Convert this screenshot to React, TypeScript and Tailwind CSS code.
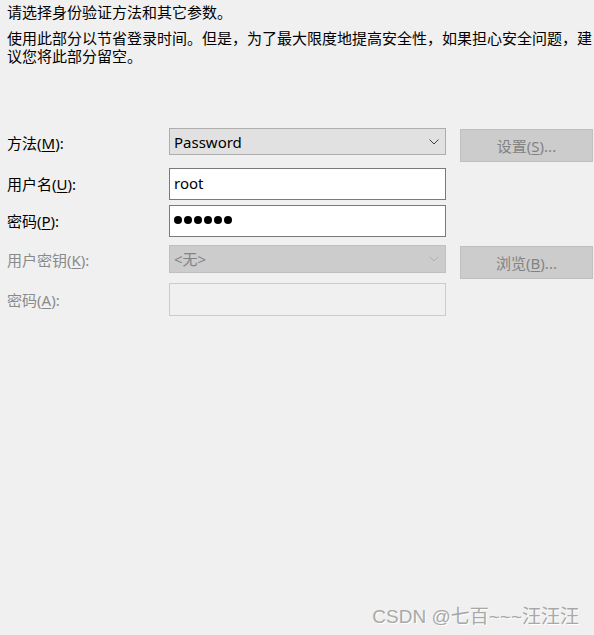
import React from "react";

const font = { fontFamily: '"Noto Sans", "Noto Sans CJK SC", sans-serif' };

function Chevron({ color }: { color: string }) {
  return (
    <svg width="10" height="6" viewBox="0 0 10 6" className="shrink-0">
      <polyline points="0.5,0.5 5,5 9.5,0.5" fill="none" stroke={color} strokeWidth="1" />
    </svg>
  );
}

function Label({ text, k, disabled }: { text: string; k: string; disabled?: boolean }) {
  return (
    <span className={disabled ? "text-[#8a8a8a]" : "text-black"}>
      {text}(<span className="underline underline-offset-2">{k}</span>):
    </span>
  );
}

export default function App() {
  return (
    <div
      className="relative w-[594px] h-[635px] bg-[#f0f0f0] text-[15px] leading-[18px] text-black overflow-hidden"
      style={font}
    >
      <div className="pl-[7px] pt-[3px]">
        <p>请选择身份验证方法和其它参数。</p>
        <p className="mt-[8px] pr-[1px]">
          使用此部分以节省登录时间。但是，为了最大限度地提高安全性，如果担心安全问题，建议您将此部分留空。
        </p>
      </div>

      <div className="mt-[63px] pl-[7px] flex flex-col">
        {/* Row 1 */}
        <div className="flex items-start">
          <div className="w-[162px] h-[27px] flex items-center pt-[3px]">
            <Label text="方法" k="M" />
          </div>
          <div className="w-[277px] h-[27px] bg-[#e1e1e1] border border-[#adadad] flex items-center justify-between pl-[4px] pr-[6px]">
            <span>Password</span>
            <Chevron color="#404040" />
          </div>
          <div className="ml-[14px] mt-[1px] w-[133px] h-[33px] bg-[#cccccc] border border-[#bfbfbf] flex items-center justify-center text-[#838383]">
            <span>
              设置(<span className="underline underline-offset-2">S</span>)...
            </span>
          </div>
        </div>

        {/* Row 2 */}
        <div className="flex items-start mt-[6px]">
          <div className="w-[162px] h-[32px] flex items-center">
            <Label text="用户名" k="U" />
          </div>
          <div className="w-[277px] h-[32px] bg-white border border-[#7a7a7a] flex items-center pl-[4px] pb-[2px]">
            <span>root</span>
          </div>
        </div>

        {/* Row 3 */}
        <div className="flex items-start mt-[5px]">
          <div className="w-[162px] h-[32px] flex items-center">
            <Label text="密码" k="P" />
          </div>
          <div className="w-[277px] h-[32px] bg-white border border-[#7a7a7a] flex items-center pl-[4px] pb-[3px] gap-[2px]">
            {[0, 1, 2, 3, 4, 5].map((i) => (
              <span key={i} className="w-[8px] h-[8px] rounded-full bg-black" />
            ))}
          </div>
        </div>

        {/* Row 4 */}
        <div className="flex items-start mt-[8px]">
          <div className="w-[162px] h-[28px] flex items-center pt-[2px]">
            <Label text="用户密钥" k="K" disabled />
          </div>
          <div className="w-[277px] h-[28px] bg-[#cccccc] border border-[#bfbfbf] flex items-center justify-between pl-[4px] pr-[6px] text-[#838383]">
            <span>&lt;无&gt;</span>
            <Chevron color="#b0b0b0" />
          </div>
          <div className="ml-[14px] mt-[1px] w-[133px] h-[33px] bg-[#cccccc] border border-[#bfbfbf] flex items-center justify-center text-[#838383]">
            <span>
              浏览(<span className="underline underline-offset-2">B</span>)...
            </span>
          </div>
        </div>

        {/* Row 5 */}
        <div className="flex items-start mt-[4px]">
          <div className="w-[162px] h-[33px] flex items-center">
            <Label text="密码" k="A" disabled />
          </div>
          <div className="w-[277px] h-[33px] bg-[#f0f0f0] border border-[#cccccc]" />
        </div>
      </div>

      <div
        className="absolute right-[15px] bottom-[6px] text-[19px] leading-[24px] text-[#a8a8a8]"
        style={{ fontFamily: '"Liberation Sans", "Noto Sans CJK SC", sans-serif', textShadow: "1px 1px 0 #ffffff" }}
      >
        CSDN @七百~~~汪汪汪
      </div>
    </div>
  );
}
